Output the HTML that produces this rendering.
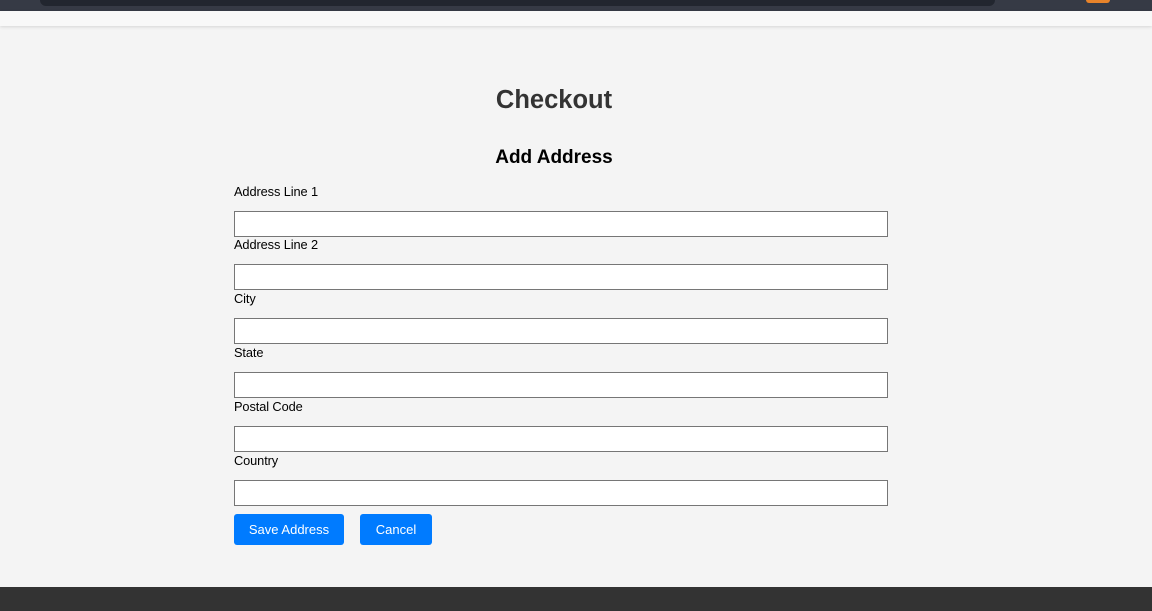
<!DOCTYPE html>
<html><head><style>
*{box-sizing:border-box;margin:0;padding:0}
body{width:1152px;height:611px;background:#f4f4f4;font-family:"Liberation Sans",Arial,sans-serif;position:relative;overflow:hidden}
.top{position:absolute;left:0;top:0;width:1152px;height:11px;background:#363a45}
.top .in{position:absolute;left:40px;top:0;width:955px;height:6px;background:#22262f;border-radius:0 0 10px 10px}
.top .or{position:absolute;left:1086px;top:0;width:24px;height:3px;background:#e8832a;border-radius:0 0 3px 3px}
.nav{position:absolute;left:0;top:11px;width:1152px;height:15px;background:#f8f8f8;box-shadow:0 1px 3px rgba(0,0,0,.12)}
h1{position:absolute;top:86px;left:0;width:1108px;text-align:center;font-size:25.5px;color:#333;font-weight:bold}
h2{position:absolute;top:147px;left:0;width:1108px;text-align:center;font-size:19px;color:#000;font-weight:bold}
.l{position:absolute;left:234px;font-size:12.8px;color:#000;letter-spacing:-0.1px}
.i{position:absolute;left:234px;width:654px;height:26px;background:#fff;border:1px solid #767676}
.b{position:absolute;top:514px;height:31px;background:#007bff;color:#fff;font-size:13px;border-radius:3px;text-align:center;line-height:31px}
.foot{position:absolute;left:0;top:587px;width:1152px;height:24px;background:#333}
</style></head><body>
<div class="top"><div class="in"></div><div class="or"></div></div>
<div class="nav"></div>
<h1>Checkout</h1>
<h2>Add Address</h2>
<div class="l" style="top:184px">Address Line 1</div><div class="i" style="top:211px"></div>
<div class="l" style="top:237px">Address Line 2</div><div class="i" style="top:264px"></div>
<div class="l" style="top:291px">City</div><div class="i" style="top:318px"></div>
<div class="l" style="top:345px">State</div><div class="i" style="top:372px"></div>
<div class="l" style="top:399px">Postal Code</div><div class="i" style="top:426px"></div>
<div class="l" style="top:453px">Country</div><div class="i" style="top:480px"></div>
<div class="b" style="left:234px;width:110px">Save Address</div>
<div class="b" style="left:360px;width:72px">Cancel</div>
<div class="foot"></div>
</body></html>
